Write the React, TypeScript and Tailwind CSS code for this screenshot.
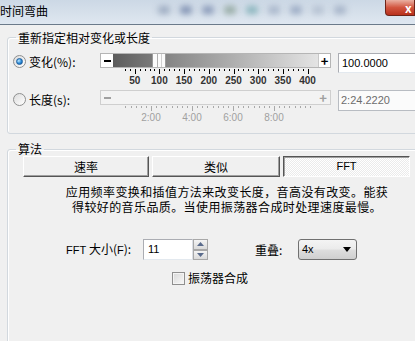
import React from "react";

const cjk = "font-['Noto_Sans_CJK_SC','Noto_Sans_CJK_TC',sans-serif]";
const num = "font-['Liberation_Sans',Arial,sans-serif]";

function Radio({ checked }: { checked?: boolean }) {
  return (
    <span className="flex h-[13px] w-[13px] shrink-0 items-center justify-center rounded-full border border-[#8e8f8f] bg-[linear-gradient(135deg,#dcdcdc,#ffffff)]">
      {checked && (
        <span className="h-[7px] w-[7px] rounded-full border border-[#1f5f9e] bg-[radial-gradient(circle_at_35%_35%,#bfe9ff,#2a8ad8_55%,#0b4f96)]" />
      )}
    </span>
  );
}

function Ticks({ kind }: { kind: "pct" | "time" }) {
  const ticks: { x: number; major: boolean }[] = [];
  const labels: { x: number; t: string }[] = [];
  if (kind === "pct") {
    for (let v = 30; v <= 400; v += 10) {
      const x = 10 + v * 0.494;
      ticks.push({ x, major: v % 50 === 0 });
      if (v % 50 === 0) labels.push({ x, t: String(v) });
    }
  } else {
    for (let s = 45; s <= 585; s += 15) {
      const x = 10 + (s / 60) * 20.5;
      ticks.push({ x, major: s % 120 === 0 });
      if (s % 120 === 0) labels.push({ x, t: `${s / 60}:00` });
    }
  }
  const c = kind === "pct" ? "#000" : "#a8a8a8";
  return (
    <svg width="231" height="22" className="block">
      {ticks.map((k, i) => (
        <line key={i} x1={Math.round(k.x) + 0.5} x2={Math.round(k.x) + 0.5} y1={1} y2={k.major ? 6 : 3} stroke={c} strokeWidth={1} />
      ))}
      {labels.map((l, i) => (
        <text
          key={i}
          x={l.x}
          y={16}
          textAnchor="middle"
          fontSize="10"
          fontWeight={kind === "pct" ? 700 : 400}
          fontFamily="Liberation Sans, Arial, sans-serif"
          fill={kind === "pct" ? "#333" : "#a0a0a0"}
        >
          {l.t}
        </text>
      ))}
    </svg>
  );
}

export default function App() {
  const blobs = ["#9aa9bf", "#7d8fb0", "#8596b6", "#93a8a0", "#86b3bb", "#a6b4c9", "#98a8c2", "#b3bfd0", "#a2b0c6"];
  return (
    <div className={`relative h-[341px] w-[415px] overflow-hidden bg-[#f0f0f0] text-[12px] text-black ${cjk}`}>
      {/* title bar */}
      <div className="flex h-[25px] items-start border-b border-[#6b7a8a] bg-[linear-gradient(180deg,#ccd8e5,#dfe7f0)]">
        <span className="w-[150px] shrink-0 pt-[4px] leading-[14px]">时间弯曲</span>
        <div className="flex flex-1 items-center gap-[10px] pt-[6px] pl-[8px]">
          {blobs.map((b, i) => (
            <span key={i} className="h-[8px] w-[12px] rounded-full blur-[3px]" style={{ backgroundColor: b }} />
          ))}
        </div>
        <div className="ml-[8px] flex h-[16px] w-[30px] shrink-0 items-center rounded-bl-[4px] border border-t-0 border-[#6e2418] bg-[linear-gradient(180deg,#eab0a2,#d2553f_50%,#b8301c)] pl-[19px] text-[12px] font-bold leading-none text-white">
          x
        </div>
      </div>

      {/* group 1 */}
      <fieldset className="mt-[6px] ml-[7px] h-[103px] w-[420px] rounded-[3px] border border-[#d2d8de] shadow-[inset_1px_1px_0_#fff]">
        <legend className="ml-[8px] px-[2px] leading-[13px]">重新指定相对变化或长度</legend>
        <div className="flex flex-col pt-[9px]">
          <div className="flex h-[37px] items-start">
            <div className="flex w-[92px] items-center gap-[3px] pl-[5px] pt-[2px]">
              <Radio checked />
              <span className="leading-[13px]">变化(%):</span>
            </div>
            <div className="w-[231px]">
              <div className="flex h-[15px] items-stretch border border-[#b5b5b5] bg-white">
                <div className="flex w-[12px] items-center justify-center">
                  <span className="h-[2px] w-[7px] bg-black" />
                </div>
                <div className="flex flex-1 items-stretch bg-[linear-gradient(90deg,#5c5c5c,#8a8a8a_30%,#c4c4c4_75%,#e4e4e4)]">
                  <div className="w-[39px]" />
                  <div className="flex w-[14px] justify-center gap-[3px] border-x border-[#9a9a9a] bg-[#fbfbfb]">
                    <span className="w-px bg-[#b0b0b0]" />
                    <span className="w-px bg-[#d0d0d0]" />
                  </div>
                </div>
                <div className="flex w-[12px] items-center justify-center border-l border-[#c8c8c8] text-[13px] font-bold leading-none">+</div>
              </div>
              <Ticks kind="pct" />
            </div>
            <div className={`ml-[7px] flex h-[20px] w-[90px] items-center border border-[#abadb3] border-b-[#e3e9ef] border-r-[#dbdfe6] bg-white pl-[3px] text-[11px] ${num}`}>
              100.0000
            </div>
          </div>
          <div className="flex items-start">
            <div className="flex w-[92px] items-center gap-[3px] pl-[5px] pt-[3px]">
              <Radio />
              <span className="leading-[13px]">长度(s):</span>
            </div>
            <div className="w-[231px]">
              <div className="flex h-[15px] items-center justify-between border border-[#cfcfcf] bg-[#f3f3f3] px-[3px]">
                <span className="h-[2px] w-[7px] bg-[#a0a0a0]" />
                <span className="text-[13px] font-bold leading-none text-[#a0a0a0]">+</span>
              </div>
              <Ticks kind="time" />
            </div>
            <div className={`ml-[7px] flex h-[21px] w-[90px] items-center border border-[#b8bcc2] bg-[#fbfbfb] pl-[2px] text-[11px] text-[#6d6d6d] ${num}`}>
              2:24.2220
            </div>
          </div>
        </div>
      </fieldset>

      {/* group 2 */}
      <fieldset className="mt-[8px] ml-[7px] h-[210px] w-[420px] rounded-[3px] border border-[#d2d8de] shadow-[inset_1px_1px_0_#fff]">
        <legend className="ml-[8px] px-[2px] leading-[14px]">算法</legend>
        <div className="flex gap-[3px] pl-[15px]">
          <div className="flex h-[21px] w-[126px] items-center justify-center border border-t-white border-l-white border-b-[#555] border-r-[#555] bg-[#f0f0f0] shadow-[inset_-1px_-1px_0_#a0a0a0]">
            速率
          </div>
          <div className="flex h-[21px] w-[128px] items-center justify-center border border-t-white border-l-white border-b-[#555] border-r-[#555] bg-[#f0f0f0] shadow-[inset_-1px_-1px_0_#a0a0a0]">
            类似
          </div>
          <div className={`flex h-[21px] w-[127px] items-center justify-center border border-t-[#555] border-l-[#555] border-b-white border-r-white bg-[repeating-conic-gradient(#ffffff_0_25%,#ebebeb_0_50%)] bg-[length:2px_2px] shadow-[inset_1px_1px_0_#a0a0a0] text-[11px] ${num}`}>
            FFT
          </div>
        </div>
        <p className="mt-[7px] w-[438px] whitespace-nowrap text-center leading-[15px] tracking-[0.4px]">
          应用频率变换和插值方法来改变长度，音高没有改变。能获
          <br />
          得较好的音乐品质。当使用振荡器合成时处理速度最慢。
        </p>
        <div className="mt-[25px] flex items-center">
          <span className="ml-[58px] w-[77px] leading-[14px]">
            <span className={`text-[11px] ${num}`}>FFT </span>大小(<span className={`text-[11px] ${num}`}>F</span>):
          </span>
          <div className={`flex h-[21px] w-[50px] items-center border border-[#abadb3] border-b-[#e3e9ef] border-r-[#dbdfe6] bg-white pl-[4px] text-[11px] ${num}`}>
            11
          </div>
          <div className="flex h-[21px] w-[15px] flex-col">
            {[0, 1].map((i) => (
              <div key={i} className="flex flex-1 items-center justify-center border border-[#a8a8a8] bg-[linear-gradient(180deg,#f4f4f4,#dadada)]">
                <svg width="7" height="4" viewBox="0 0 7 4">
                  <path d={i === 0 ? "M0 4 L3.5 0 L7 4 Z" : "M0 0 L3.5 4 L7 0 Z"} fill="#5a6b8c" />
                </svg>
              </div>
            ))}
          </div>
          <span className="ml-[47px] w-[43px] leading-[14px]">重叠:</span>
          <div className="flex h-[21px] w-[59px] items-center justify-between rounded-[3px] border border-[#707070] bg-[linear-gradient(180deg,#f4f4f4,#ebebeb_48%,#dedede_52%,#cfcfcf)] pl-[3px] pr-[5px]">
            <span className={`text-[11px] ${num}`}>4x</span>
            <svg width="8" height="5" viewBox="0 0 8 5">
              <path d="M0 0 L8 0 L4 5 Z" fill="#000" />
            </svg>
          </div>
        </div>
        <div className="mt-[11px] flex items-center gap-[3px] pl-[164px]">
          <span className="h-[13px] w-[13px] border border-[#8f8f8f] bg-[linear-gradient(135deg,#d8d8d8,#f8f8f8)] shadow-[inset_0_0_0_1px_#f4f4f4]" />
          <span className="leading-[14px]">振荡器合成</span>
        </div>
      </fieldset>
    </div>
  );
}
